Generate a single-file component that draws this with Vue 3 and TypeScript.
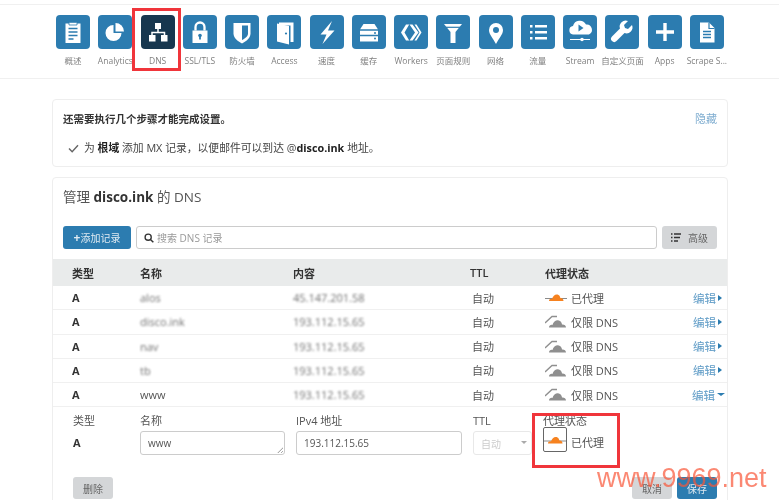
<script setup lang="ts">
interface NavItem {
  label: string
  active?: boolean
  paths: string
}

interface DnsRow {
  name: string
  content: string
  proxied: boolean
  open?: boolean
  clear?: boolean
}

const navItems: NavItem[] = [
  { label: '概述', paths: '<path d="M9.500 8.500h3.500V7h8v1.500h3.500V28h-15z" fill="#fff"/><path d="M13 7.500h8v2.500h-8z" fill="#fff" stroke="#2c7cb0" stroke-width=".8"/><path d="M12.500 13.500h9M12.500 17h9M12.500 20.500h9M12.500 24h5" stroke="#2c7cb0" stroke-width="1.500"/>' },
  { label: 'Analytics', paths: '<path d="M15.500 10v8h8a8 8 0 1 1-8-8z" fill="#fff"/><path d="M17.500 8a8.500 8.500 0 0 1 8.500 8.500h-8.500z" fill="#fff"/>' },
  { label: 'DNS', active: true, paths: '<path d="M14 8h6v6h-6zM8 20h6.500v6.500H8zM20 20h6.500v6.500H20z" fill="#fff"/><path d="M17 14v3.500M11 20v-2.500h12.500V20" stroke="#fff" stroke-width="1.500" fill="none"/>' },
  { label: 'SSL/TLS', paths: '<path d="M9.500 15.500h15V28h-15z" fill="#fff"/><path d="M12.500 15.500v-3.500a4.500 4.500 0 0 1 9 0v3.500" stroke="#fff" stroke-width="2.300" fill="none"/><circle cx="17" cy="20.500" r="1.800" fill="#2c7cb0"/><path d="M16.100 21h1.800v3.500h-1.800z" fill="#2c7cb0"/>' },
  { label: '防火墙', paths: '<path d="M8.500 8h17v10.500c0 4.500-4 7.500-8.500 10-4.500-2.500-8.500-5.500-8.500-10z" fill="#fff"/><path d="M17 10.500h6v8c0 3-3 5-6 6.500z" fill="#2c7cb0"/>' },
  { label: 'Access', paths: '<path d="M12 7.500h14.500V27h-3v-16.500H12z" fill="#fff"/><path d="M10 8.500l12 2.500v18.500l-12-3z" fill="#fff"/><circle cx="19" cy="18.500" r="1.100" fill="#2c7cb0"/>' },
  { label: '速度', paths: '<path d="M22 6l-11.500 13.500h6L12.500 29 24.500 15.500h-6.500z" fill="#fff"/>' },
  { label: '缓存', paths: '<path d="M11.500 9h11l3.500 5.500V26.500H8V14.500z" fill="#fff"/><path d="M8 15h18M8 20.500h18" stroke="#2c7cb0" stroke-width="1.500"/><circle cx="23" cy="18" r="1" fill="#2c7cb0"/><circle cx="23" cy="23.500" r="1" fill="#2c7cb0"/>' },
  { label: 'Workers', paths: '<path d="M12 9.500h3.200L10.500 17.500l4.700 8H12L7 17.500zM15.500 9.500h3l6 8-6 8h-3l5.500-8zM20.500 9.500h2l5 8-5 8h-2l5-8z" fill="#fff"/>' },
  { label: '页面规则', paths: '<path d="M8 9h18l-6.500 8v11h-5V17z" fill="#fff"/><path d="M10 12.300h14" stroke="#2c7cb0" stroke-width="1.200"/>' },
  { label: '网络', paths: '<path d="M17 8a7 7 0 0 1 7 7c0 4.500-4.500 9-7 14-2.500-5-7-9.500-7-14a7 7 0 0 1 7-7z" fill="#fff"/><circle cx="17" cy="15" r="3" fill="#2c7cb0"/>' },
  { label: '流量', paths: '<path d="M9 10h2.500v2.500H9zM9 16h2.500v2.500H9zM9 22h2.500v2.500H9zM14 10h12v2.500H14zM14 16h12v2.500H14zM14 22h12v2.500H14z" fill="#fff"/>' },
  { label: 'Stream', paths: '<path d="M10 19.500a4.300 4.300 0 0 1 0-8.500 7 7 0 0 1 13-1.500 5.300 5.300 0 0 1 3 10z" fill="#fff"/><path d="M15.500 9.500l5 3.500-5 3.500z" fill="#2c7cb0"/><path d="M7 24.500h20" stroke="#fff" stroke-width="1"/><circle cx="19" cy="24.500" r="1.800" fill="#fff"/>' },
  { label: '自定义页面', paths: '<path d="M27 10l-4 4-3-1-1-3 4-4a6 6 0 0 0-8 7.500L7 21.500a3 3 0 0 0 4.500 4.500l8-8A6 6 0 0 0 27 10z" fill="#fff"/>' },
  { label: 'Apps', paths: '<path d="M15.300 8h3.400v7.300H26v3.400h-7.300V26h-3.400v-7.300H8v-3.400h7.300z" fill="#fff"/>' },
  { label: 'Scrape S...', paths: '<path d="M10 7.500h9l5.500 5.500V27.500H10z" fill="#fff"/><path d="M19 7.500v6h5.500" stroke="#2c7cb0" stroke-width="1.200" fill="none"/><path d="M13 16.500h8M13 19.500h8M13 22.500h8" stroke="#2c7cb0" stroke-width="1.500"/>' }
]

const rows: DnsRow[] = [
  { name: 'alos', content: '45.147.201.58', proxied: true },
  { name: 'disco.ink', content: '193.112.15.65', proxied: false },
  { name: 'nav', content: '193.112.15.65', proxied: false },
  { name: 'tb', content: '193.112.15.65', proxied: false },
  { name: 'www', content: '193.112.15.65', proxied: false, open: true, clear: true }
]
</script>

<template>
  <div class="page">
    <nav class="nav">
      <div v-for="item in navItems" :key="item.label" class="nav-item">
        <div class="tile" :class="{ active: item.active }">
          <svg viewBox="0 0 34 34" width="34" height="34" v-html="item.paths"></svg>
        </div>
        <span class="nav-label">{{ item.label }}</span>
      </div>
    </nav>

    <section class="card steps">
      <div class="steps-head">
        <strong>还需要执行几个步骤才能完成设置。</strong>
        <a class="hide">隐藏</a>
      </div>
      <p class="step">
        <svg viewBox="0 0 12 10" width="11" height="9"><path d="M1 5l3.500 3.500L11 1.500" stroke="#666" stroke-width="1.600" fill="none" /></svg>
        <span>为 <b>根域</b> 添加 MX 记录，以便邮件可以到达 @<b>disco.ink</b> 地址。</span>
      </p>
    </section>

    <section class="card dns">
      <h2 class="title">管理 <b>disco.ink</b> 的 DNS</h2>

      <div class="toolbar">
        <button class="btn primary add"><b>+</b>添加记录</button>
        <div class="search">
          <svg viewBox="0 0 12 12" width="10" height="10"><circle cx="5" cy="5" r="3.700" stroke="#333" stroke-width="1.600" fill="none" /><path d="M8 8l3.200 3.200" stroke="#333" stroke-width="1.800" /></svg>
          <span>搜索 DNS 记录</span>
        </div>
        <button class="btn grey advanced">
          <svg viewBox="0 0 10 9" width="10" height="9"><path d="M0 1h1.500M3 1h7M0 4.500h1.500M3 4.500h6M0 8h1.500M3 8h4" stroke="#333" stroke-width="1.400" /></svg>
          高级
        </button>
      </div>

      <div class="row head">
        <span>类型</span><span>名称</span><span>内容</span><span>TTL</span><span>代理状态</span><span></span>
      </div>
      <div v-for="row in rows" :key="row.name" class="row">
        <b class="type">A</b>
        <span :class="{ blur: !row.clear }">{{ row.name }}</span>
        <span class="blur">{{ row.content }}</span>
        <span class="ttl">自动</span>
        <span class="proxy">
          <svg v-if="row.proxied" viewBox="0 0 22 13" width="22" height="13">
            <path d="M0 7.500h22" stroke="#8a8a8a" stroke-width="1" />
            <path d="M4 10c0-1.500 1.500-2.500 3-2C8 4.500 11 2.500 13.500 4c1.200.7 1.800 2 1.800 3 1.700-.3 3.200 1 3.200 3z" fill="#f6821f" />
          </svg>
          <svg v-else viewBox="0 0 22 13" width="22" height="13">
            <path d="M0 8l7-6.500h5" stroke="#8f8f8f" stroke-width="1.300" fill="none" />
            <path d="M4 12.500c0-2 2-3.200 3.500-2.500C8.500 6.500 12 4 15 6c1.300.7 2 2.500 2 3.500 2-.3 4 1 4 3z" fill="#8f8f8f" />
          </svg>
          {{ row.proxied ? '已代理' : '仅限 DNS' }}
        </span>
        <a class="edit">编辑<i :class="row.open ? 'caret-down' : 'caret-right'"></i></a>
      </div>

      <div class="editor">
        <div class="fields">
          <div class="field"><label>类型</label><b class="type value">A</b></div>
          <div class="field"><label>名称</label><div class="input resize">www</div></div>
          <div class="field"><label>IPv4 地址</label><div class="input ip">193.112.15.65</div></div>
          <div class="field"><label>TTL</label><div class="input select">自动<i class="caret-grey"></i></div></div>
          <div class="field">
            <label>代理状态</label>
            <div class="proxy toggle">
              <span class="toggle-box">
                <svg viewBox="0 0 22 10" width="22" height="10">
                  <path d="M0 6h22" stroke="#8a8a8a" stroke-width="1" />
                  <path d="M4 8.500c0-1.500 1.500-2.500 3-2C8 3 11 1 13.500 2.500c1.200.7 1.800 2 1.800 3 1.700-.3 3.200 1 3.200 3z" fill="#f6821f" />
                </svg>
              </span>
              <span class="toggle-text">已代理</span>
            </div>
          </div>
        </div>
        <div class="actions">
          <button class="btn grey small">删除</button>
          <span class="spacer"></span>
          <button class="btn grey small">取消</button>
          <button class="btn primary small">保存</button>
        </div>
      </div>
    </section>

    <div class="mark mark-dns"></div>
    <div class="mark mark-proxy"></div>
    <div class="watermark">www.9969.net</div>
  </div>
</template>

<style>
html,
body {
  margin: 0;
  background: #fff;
}
</style>

<style scoped>
.page {
  position: relative;
  width: 779px;
  height: 500px;
  overflow: hidden;
  box-sizing: border-box;
  padding-top: 4px;
  background: #fff;
  color: #444;
  font-family: 'Open Sans', 'Noto Sans CJK SC', sans-serif;
  font-size: 11px;
  filter: blur(0.35px);
}

.nav {
  display: grid;
  grid-template-columns: repeat(16, 1fr);
  height: 75px;
  box-sizing: border-box;
  padding: 10px 51px 0 52px;
  border-top: 1px solid #f0f0f0;
  border-bottom: 1px solid #f0f0f0;
}

.nav-item {
  display: flex;
  flex-direction: column;
  align-items: center;
  min-width: 0;
}

.tile {
  width: 34px;
  height: 34px;
  flex: none;
  border-radius: 4px;
  background: #2c7cb0;
}

.tile.active {
  background: #17374f;
}

.tile svg {
  display: block;
}

.nav-label {
  margin-top: 6px;
  font-size: 8.5px;
  line-height: 12px;
  color: #808080;
  white-space: nowrap;
}

.card {
  width: 676px;
  margin-left: 52px;
  box-sizing: border-box;
  border: 1px solid #eee;
  border-radius: 4px;
  background: #fff;
}

.steps {
  height: 68px;
  margin-top: 20px;
  padding: 11px 10px 0;
  font-size: 10.5px;
}

.steps-head {
  display: flex;
  justify-content: space-between;
  color: #333;
  line-height: 16px;
}

.hide {
  color: #7fadd0;
  font-size: 11px;
}

.step {
  display: flex;
  align-items: center;
  gap: 5px;
  margin: 13px 0 0 5px;
  font-size: 10.8px;
  line-height: 16px;
}

.step b {
  color: #222;
}

.dns {
  height: 340px;
  margin-top: 10px;
}

.title {
  margin: 8px 0 0 10px;
  font-size: 13.5px;
  font-weight: 400;
  line-height: 22px;
  color: #555;
}

.title b {
  color: #333;
}

.toolbar {
  display: flex;
  gap: 5px;
  height: 23px;
  margin: 18px 10px 0;
}

.btn {
  border: 0;
  border-radius: 3px;
  font: inherit;
  padding: 0;
}

.primary {
  background: #2c7cb0;
  color: #dfeaf2;
}

.grey {
  background: #d4d6d8;
  color: #666;
}

.add {
  width: 68px;
  font-size: 10px;
}

.add b {
  font-size: 12px;
}

.advanced {
  display: flex;
  align-items: center;
  justify-content: center;
  gap: 7px;
  width: 55px;
  font-size: 10px;
}

.search {
  display: flex;
  flex: 1;
  align-items: center;
  gap: 3px;
  padding-left: 7px;
  border: 1px solid #ccc;
  border-radius: 3px;
  color: #999;
  font-size: 10px;
}

.row {
  display: grid;
  grid-template-columns: 68px 153px 177px 75px 147px 1fr;
  align-items: center;
  height: 24.25px;
  box-sizing: border-box;
  padding: 0 5px 0 19px;
  border-bottom: 1px solid #f0f0f0;
  color: #555;
  white-space: nowrap;
}

.row.head {
  height: 27px;
  margin-top: 10px;
  background: #e9ebeb;
  border-bottom: 0;
  color: #333;
  font-weight: 600;
}

.ttl {
  padding-left: 2px;
}

.type {
  color: #333;
  font-weight: 700;
}

.blur {
  filter: blur(1.2px);
  opacity: 0.85;
}

.proxy {
  display: flex;
  align-items: center;
  gap: 4px;
}

.proxy svg {
  flex: none;
}

.edit {
  display: flex;
  align-items: center;
  justify-content: flex-end;
  gap: 2px;
  color: #5e9bc6;
  font-size: 11.5px;
}

.caret-right {
  border-left: 4px solid #2c7cb0;
  border-top: 3.500px solid transparent;
  border-bottom: 3.500px solid transparent;
}

.caret-down {
  border-top: 3.500px solid #2c7cb0;
  border-left: 4px solid transparent;
  border-right: 4px solid transparent;
  margin-right: -2px;
}

.editor {
  padding: 0 10px 0 20px;
}

.fields {
  display: grid;
  grid-template-columns: 67px 156px 177px 70px 1fr;
  height: 70px;
  box-sizing: border-box;
  padding-top: 5px;
}

.field {
  display: flex;
  flex-direction: column;
  min-width: 0;
}

.field label {
  height: 19px;
  line-height: 18px;
  color: #555;
}

.value {
  margin-top: 3px;
  line-height: 18px;
}

.input {
  display: flex;
  align-items: center;
  height: 24px;
  box-sizing: border-box;
  padding-left: 7px;
  border: 1px solid #ccc;
  border-radius: 3px;
  color: #555;
  font-size: 10px;
}

.resize {
  position: relative;
  width: 145px;
}

/* textarea drag handle */
.resize::after {
  content: '';
  position: absolute;
  right: 1px;
  bottom: 1px;
  width: 6px;
  height: 6px;
  background: repeating-linear-gradient(135deg, transparent 0 1.500px, #aaa 1.500px 2.500px);
  clip-path: polygon(100% 0, 100% 100%, 0 100%);
}

.ip {
  width: 166px;
}

.select {
  position: relative;
  width: 59px;
  border-color: #e8e8e8;
  color: #ccc;
}

.caret-grey {
  position: absolute;
  right: 4px;
  top: 9px;
  border-top: 3.500px solid #aaa;
  border-left: 3.500px solid transparent;
  border-right: 3.500px solid transparent;
}

.toggle {
  margin-top: -4px;
  color: #555;
}

.toggle-box {
  display: flex;
  align-items: center;
  justify-content: center;
  width: 24px;
  height: 25px;
  box-sizing: border-box;
  border: 1.500px solid #666;
  border-radius: 2px;
}

.toggle-text {
  margin-top: 4px;
}

.actions {
  display: flex;
  gap: 5px;
}

.spacer {
  flex: 1;
}

.small {
  width: 40px;
  height: 22px;
  font-size: 10px;
}

/* annotations painted on top of the screenshot */
.mark {
  position: absolute;
  box-sizing: border-box;
  border: 3px solid #f0353b;
}

.mark-dns {
  left: 132px;
  top: 8px;
  width: 49px;
  height: 63px;
}

.mark-proxy {
  left: 532px;
  top: 413px;
  width: 88px;
  height: 55px;
}

.watermark {
  position: absolute;
  left: 597px;
  top: 462px;
  font-family: 'Liberation Sans', sans-serif;
  font-size: 27px;
  line-height: 32px;
  color: rgba(250, 85, 55, 0.7);
  white-space: nowrap;
}
</style>
